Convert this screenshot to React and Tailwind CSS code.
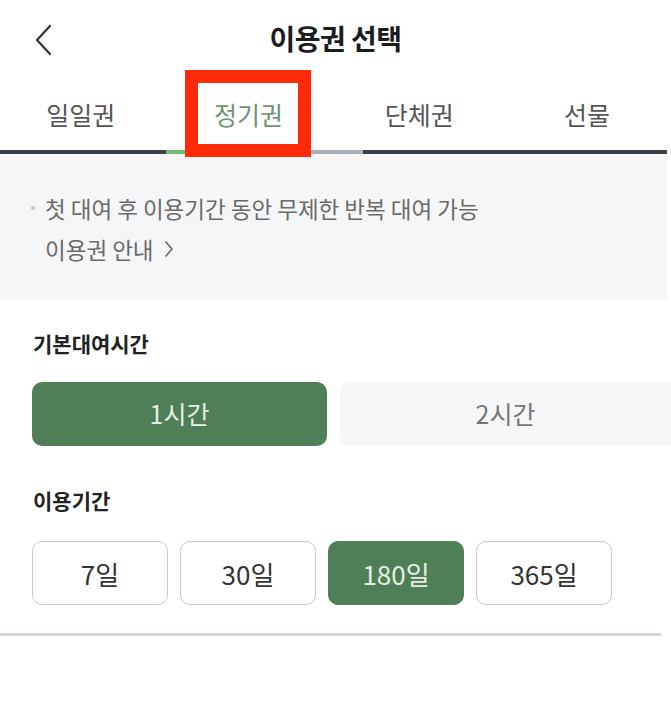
import { useState } from 'react';

const GREEN = 'bg-[#4f7f57]';

export default function App() {
  const [tab, setTab] = useState(1);
  const [hours, setHours] = useState(1);
  const [days, setDays] = useState(180);

  const tabs = ['일일권', '정기권', '단체권', '선물'];
  const periods = [7, 30, 180, 365];

  return (
    <div className="relative w-[671px] h-[720px] bg-white font-['Noto_Sans_CJK_KR','Noto_Sans',sans-serif] overflow-hidden">
      {/* Header */}
      <div className="relative h-[76px] flex items-center justify-center">
        <button className="absolute left-[30px] top-[20px] p-1 text-[#333]">
          <svg width="20" height="32" viewBox="0 0 20 32" fill="none">
            <path d="M16 2 L3 16 L16 30" stroke="#333" strokeWidth="2.2" strokeLinecap="round" strokeLinejoin="round" />
          </svg>
        </button>
        <h1 className="text-[28px] font-bold text-[#1d1d1d] tracking-[-0.5px]">이용권 선택</h1>
      </div>

      {/* Tabs */}
      <div className="grid grid-cols-4 h-[74px]">
        {tabs.map((t, i) => (
          <button
            key={t}
            onClick={() => setTab(i)}
            className={`flex items-center justify-center pt-[4px] text-[25px] ${
              i === tab ? 'text-[#6f9274]' : 'text-[#555]'
            } ${i === 0 || i === 1 ? 'pr-[6px]' : ''}`}
          >
            {t}
          </button>
        ))}
      </div>
      <div className="flex h-[4px] mr-[4px]">
        <div className="w-[166px] bg-[#3b4147]" />
        <div className="w-[145px] bg-[#6cbf74]" />
        <div className="w-[52px] bg-[#aab0b4]" />
        <div className="flex-1 bg-[#3b4147]" />
      </div>

      {/* Notice */}
      <div className="bg-[#f5f6f7] h-[146px] mr-[4px] pl-[31px] pt-[38px]">
        <p className="flex items-center text-[22.5px] text-[#6a6a6a] leading-[32px]">
          <span className="w-[4px] h-[4px] rounded-full bg-[#c4c4c4] mr-[10px]" />
          첫 대여 후 이용기간 동안 무제한 반복 대여 가능
        </p>
        <p className="mt-[9px] pl-[14px] flex items-center gap-[10px] text-[22.5px] text-[#6a6a6a] leading-[32px]">
          이용권 안내
          <svg width="10" height="18" viewBox="0 0 10 18" fill="none">
            <path d="M2 2 L8 9 L2 16" stroke="#666" strokeWidth="1.6" strokeLinecap="round" strokeLinejoin="round" />
          </svg>
        </p>
      </div>

      {/* Base rental time */}
      <div className="pt-[28px]">
        <h2 className="pl-[33px] text-[21px] font-bold text-[#222] leading-[30px]">기본대여시간</h2>
        <div className="flex gap-[13px] pl-[32px] mt-[24px]">
          {[1, 2].map((h) => (
            <button
              key={h}
              onClick={() => setHours(h)}
              className={`h-[64px] text-[25px] ${
                h === 1 ? 'w-[295px] rounded-[10px]' : 'flex-1 rounded-l-[10px]'
              } ${h === hours ? `${GREEN} text-[#e6efe6]` : 'bg-[#f5f6f7] text-[#777]'}`}
            >
              {h}시간
            </button>
          ))}
        </div>

        <h2 className="pl-[33px] mt-[39px] text-[21px] font-bold text-[#222] leading-[30px]">이용기간</h2>
        <div className="flex gap-[12px] pl-[32px] mt-[26px]">
          {periods.map((d) => (
            <button
              key={d}
              onClick={() => setDays(d)}
              className={`w-[136px] h-[64px] rounded-[10px] text-[26px] ${
                d === days
                  ? `${GREEN} text-[#e6efe6] border border-[#4f7f57]`
                  : 'bg-white text-[#333] border border-[#c8c8c8]'
              }`}
            >
              {d}일
            </button>
          ))}
        </div>
      </div>

      <div className="mt-[28px] mr-[10px] h-[3px] bg-[#d9d3d1]" />

      {/* Highlight box */}
      <div className="absolute left-[185px] top-[70px] w-[126px] h-[87px] border-[13px] border-[#ff2a08]" />
    </div>
  );
}
